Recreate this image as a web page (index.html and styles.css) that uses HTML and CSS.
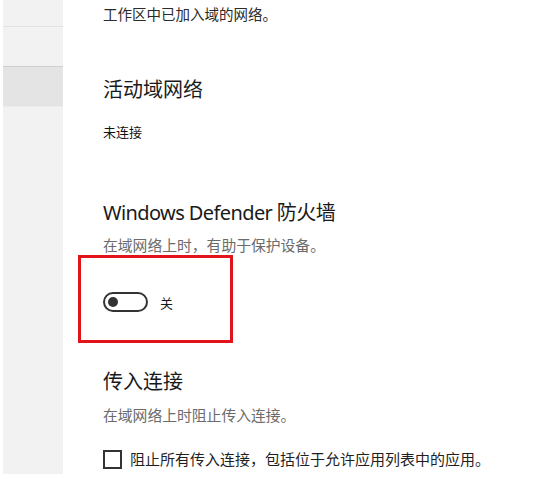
FILE: index.html
```html
<!DOCTYPE html>
<html lang="zh-CN">
<head>
<meta charset="utf-8">
<title>域网络</title>
<link rel="stylesheet" href="styles.css">
</head>
<body>
<div class="page">
  <aside class="sidebar">
    <div class="nav-item nav-first"></div>
    <div class="nav-item nav-second"></div>
    <div class="nav-item nav-selected"></div>
  </aside>
  <main class="content">
    <p class="desc dark">工作区中已加入域的网络。</p>
    <h2 class="heading h-active">活动域网络</h2>
    <p class="status">未连接</p>
    <h2 class="heading h-firewall">Windows Defender 防火墙</h2>
    <p class="desc gray sub-firewall">在域网络上时，有助于保护设备。</p>
    <div class="highlight">
      <div class="toggle-row">
        <span class="toggle"><span class="knob"></span></span>
        <span class="toggle-label">关</span>
      </div>
    </div>
    <h2 class="heading h-incoming">传入连接</h2>
    <p class="desc gray sub-incoming">在域网络上时阻止传入连接。</p>
    <label class="check-row">
      <span class="checkbox"></span>
      <span class="check-label">阻止所有传入连接，包括位于允许应用列表中的应用。</span>
    </label>
  </main>
</div>
</body>
</html>
```

FILE: styles.css
```css
* { box-sizing: border-box; }
html, body { margin: 0; padding: 0; background: #ffffff; }
body {
  font-family: "Noto Sans", "Noto Sans CJK SC", sans-serif;
  color: #1a1a1a;
  width: 533px;
  height: 479px;
  overflow: hidden;
}
.page { display: flex; align-items: flex-start; }

.sidebar {
  margin-left: 3px;
  width: 60px;
  height: 474px;
  background: #f2f2f2;
  display: flex;
  flex-direction: column;
}
.nav-first { height: 27px; border-bottom: 1px solid #e2e2e2; }
.nav-second { height: 39px; }
.nav-selected {
  height: 41px;
  background: #e4e4e4;
  border-top: 1px solid #cfcfcf;
  border-bottom: 1px solid #ececec;
}

.content {
  padding-left: 40px;
  padding-top: 4px;
  display: flex;
  flex-direction: column;
  align-items: flex-start;
}
p, h2 { margin: 0; }

.desc {
  font-family: "Noto Sans CJK SC", sans-serif;
  font-size: 14.5px;
  line-height: 20px;
}
.dark { color: #2b2b2b; }
.gray { color: #6b6b6b; }

.heading {
  font-family: "Noto Sans", "Noto Sans CJK SC", sans-serif;
  font-weight: 400;
  font-size: 20px;
  line-height: 28px;
  color: #1a1a1a;
}
.h-active { margin-top: 52px; }
.status {
  font-family: "Noto Sans CJK SC", sans-serif;
  font-size: 13px;
  line-height: 20px;
  color: #111;
  margin-top: 18px;
}
.h-firewall { margin-top: 57px; letter-spacing: -0.6px; }
.sub-firewall { margin-top: 8px; font-size: 14.8px; }

.highlight {
  margin-left: -25px;
  width: 155px;
  height: 88px;
  border: 3px solid #e3131b;
  padding: 34px 0 0 22px;
}
.toggle-row { display: flex; align-items: center; gap: 12px; height: 20px; }
.toggle {
  width: 45px;
  height: 20px;
  border: 2px solid #333333;
  border-radius: 10px;
  display: flex;
  align-items: center;
  padding-left: 3px;
}
.knob {
  width: 10px;
  height: 10px;
  border-radius: 50%;
  background: #333333;
}
.toggle-label {
  font-family: "Noto Sans CJK SC", sans-serif;
  font-size: 13px;
  color: #1a1a1a;
}

.h-incoming { margin-top: 25px; }
.sub-incoming { margin-top: 9px; font-size: 14.8px; }

.check-row {
  margin-top: 24px;
  display: flex;
  align-items: center;
  gap: 8px;
  height: 20px;
}
.checkbox {
  width: 19px;
  height: 19px;
  border: 2px solid #333333;
  background: #fff;
}
.check-label {
  font-family: "Noto Sans CJK SC", sans-serif;
  font-size: 15px;
  line-height: 20px;
  color: #1f1f1f;
}
```
